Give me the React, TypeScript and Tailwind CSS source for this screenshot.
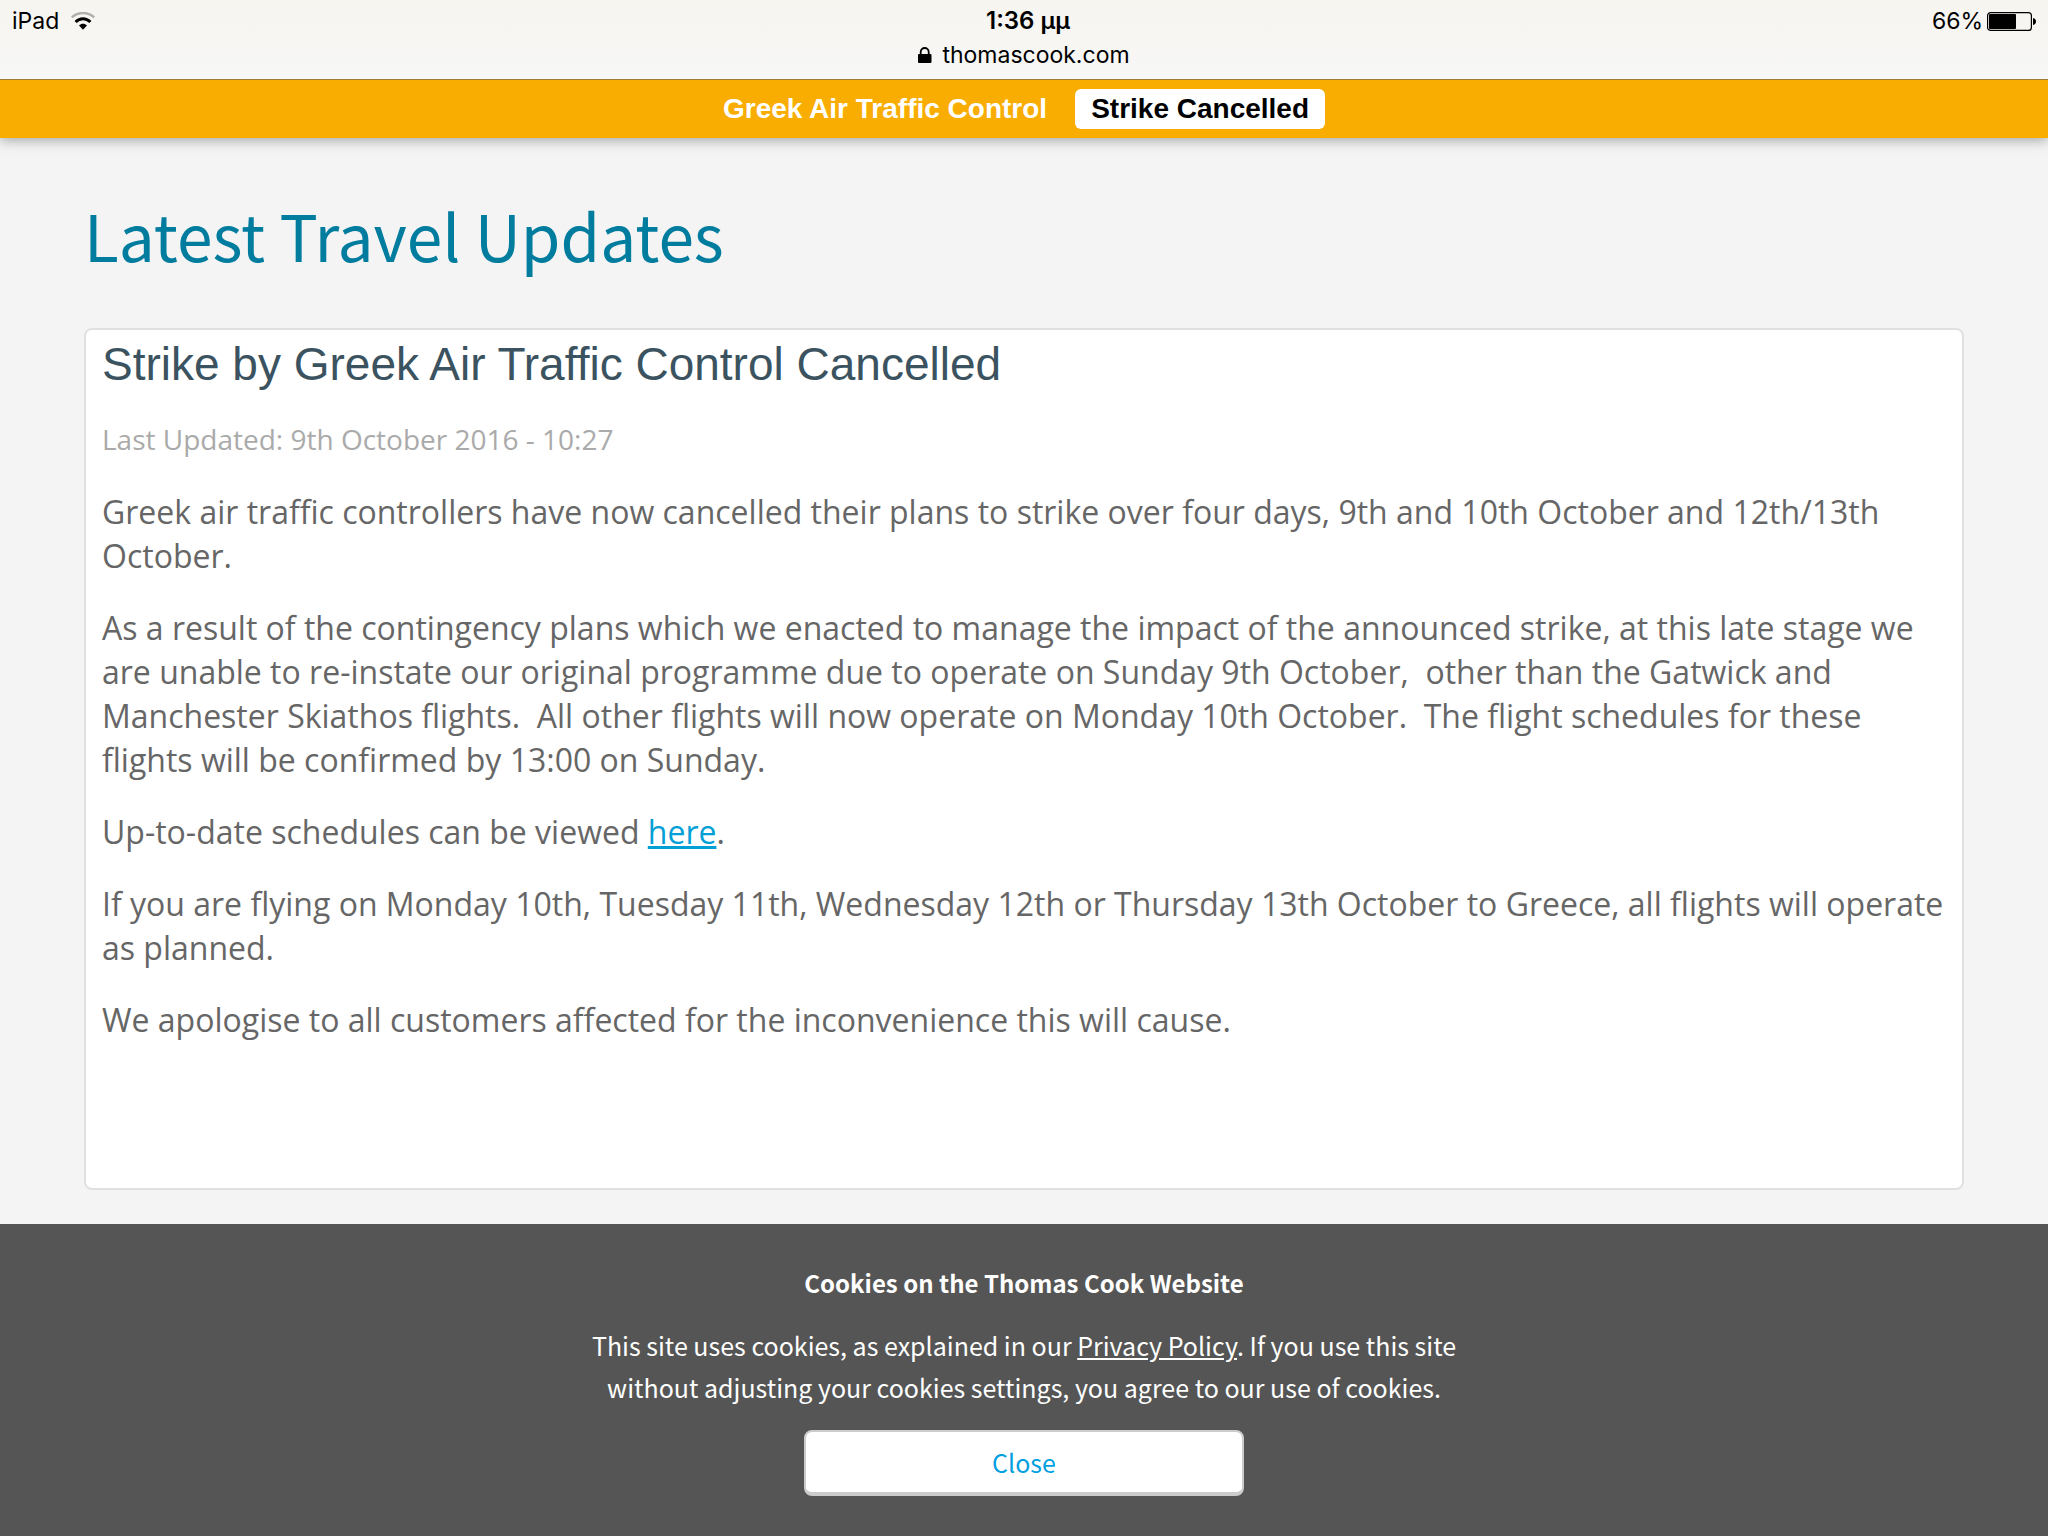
const sourceSans = "font-['Noto_Sans_CJK_SC',sans-serif]";
const openSans = "font-['Open_Sans',sans-serif]";
const helvetica = "font-['Liberation_Sans',Arial,sans-serif]";

function WifiIcon() {
  return (
    <svg width="24" height="18" viewBox="0 0 24 18" aria-hidden="true">
      <path d="M.8 5.4C7 -.4 17 -.4 23.2 5.4" fill="none" stroke="#b0afac" strokeWidth="2.6" />
      <path d="M4.6 10C9 5.8 15 5.8 19.4 10" fill="none" stroke="#000" strokeWidth="3" />
      <path d="M8 13.4C10.4 11.2 13.6 11.2 16 13.4L12 17.8Z" fill="#000" />
    </svg>
  );
}

function LockIcon() {
  return (
    <svg width="14" height="16" viewBox="0 0 14 16" aria-hidden="true">
      <rect x="0" y="7" width="13.5" height="9" rx="1" fill="#000" />
      <path d="M2.7 8V5a4 4 0 0 1 8 0v3" fill="none" stroke="#000" strokeWidth="1.8" />
    </svg>
  );
}

function BatteryIcon() {
  return (
    <svg width="49" height="19" viewBox="0 0 49 19" aria-hidden="true">
      <rect x=".6" y=".6" width="43.8" height="17.8" rx="3" fill="none" stroke="#000" strokeWidth="1.2" />
      <rect x="2" y="2" width="27" height="15" rx="1" fill="#000" />
      <path d="M46 6c2 .4 3 1.7 3 3.5S48 12.6 46 13Z" fill="#000" />
    </svg>
  );
}

function StatusBar() {
  return (
    <header className="z-20 border-b border-[#a37c33] bg-linear-to-b from-[#f7f5f0] to-[#f7f7f6] font-['Inter',sans-serif] text-[23px] leading-8 text-black">
      <div className="grid grid-cols-3 items-center px-3 pt-[5px]">
        <div className="flex items-center gap-3">
          <span>iPad</span>
          <WifiIcon />
        </div>
        <span className="pl-2 text-center text-2xl leading-8 font-semibold">1:36 μμ</span>
        <div className="flex items-center justify-end gap-1">
          <span>66%</span>
          <BatteryIcon />
        </div>
      </div>
      <div className="flex items-center justify-center gap-2.5 pt-0.5 pb-2">
        <LockIcon />
        <span>thomascook.com</span>
      </div>
    </header>
  );
}

function Tabs() {
  return (
    <nav className={`${helvetica} z-10 flex items-center justify-center gap-3 bg-[#f9ad00] py-[9px] text-[28px] leading-10 font-bold shadow-[0_2px_12px_rgba(0,0,0,0.35)]`}>
      <a href="#control" className="pr-4 text-white">
        Greek Air Traffic Control
      </a>
      <a href="#cancelled" className="rounded-md bg-white px-4 text-black">
        Strike Cancelled
      </a>
    </nav>
  );
}

function CookieBar() {
  return (
    <footer className={`${sourceSans} flex flex-col items-center bg-[#555] pt-[38px] pb-10 text-center text-[25px] leading-[42px] text-white`}>
      <h2 className="text-2xl leading-[42px] font-bold">Cookies on the Thomas Cook Website</h2>
      <p className="mt-5 max-w-[880px]">
        This site uses cookies, as explained in our{" "}
        <a href="#privacy" className="underline">
          Privacy Policy
        </a>
        . If you use this site without adjusting your cookies settings, you agree to our use of cookies.
      </p>
      <button
        type="button"
        className="mt-[22px] w-[440px] rounded-lg border-2 border-b-4 border-[#ccc] bg-white py-[9px] text-[#009fdf]"
      >
        Close
      </button>
    </footer>
  );
}

export default function App() {
  return (
    <div className="flex min-h-screen flex-col bg-[#f4f4f4]">
      <StatusBar />
      <Tabs />

      <main className="flex flex-1 flex-col px-[84px] pt-12 pb-[34px]">
        <h1 className={`${sourceSans} text-[64px] leading-24 text-[#007c9e]`}>
          Latest Travel Updates
        </h1>

        <article className="mt-[46px] flex-1 rounded-lg border-2 border-[#e0e0e0] bg-white px-4 pt-1.5">
          <h2 className={`${helvetica} text-[46px] leading-14 text-[#3b5360]`}>
            Strike by Greek Air Traffic Control Cancelled
          </h2>
          <p className={`${openSans} mt-[27px] text-[28px] leading-10 text-[#aaa]`}>
            Last Updated: 9th October 2016 - 10:27
          </p>

          <div className={`${openSans} mt-[31px] flex flex-col gap-7 text-[32px] leading-11 text-[#666]`}>
            <p>
              Greek air traffic controllers have now cancelled their plans to strike over four days, 9th and 10th
              October and 12th/13th October.
            </p>
            <p>
              As a result of the contingency plans which we enacted to manage the impact of the announced strike, at
              this late stage we are unable to re-instate our original programme due to operate on Sunday 9th
              October,&nbsp; other than the Gatwick and Manchester Skiathos flights.&nbsp; All other flights will now
              operate on Monday 10th October.&nbsp; The flight schedules for these flights will be confirmed by 13:00
              on Sunday.
            </p>
            <p>
              Up-to-date schedules can be viewed{" "}
              <a href="#schedules" className="text-[#009fd6] underline">
                here
              </a>
              .
            </p>
            <p>
              If you are flying on Monday 10th, Tuesday 11th, Wednesday 12th or Thursday 13th October to Greece, all
              flights will operate as planned.
            </p>
            <p>We apologise to all customers affected for the inconvenience this will cause.</p>
          </div>
        </article>
      </main>

      <CookieBar />
    </div>
  );
}
